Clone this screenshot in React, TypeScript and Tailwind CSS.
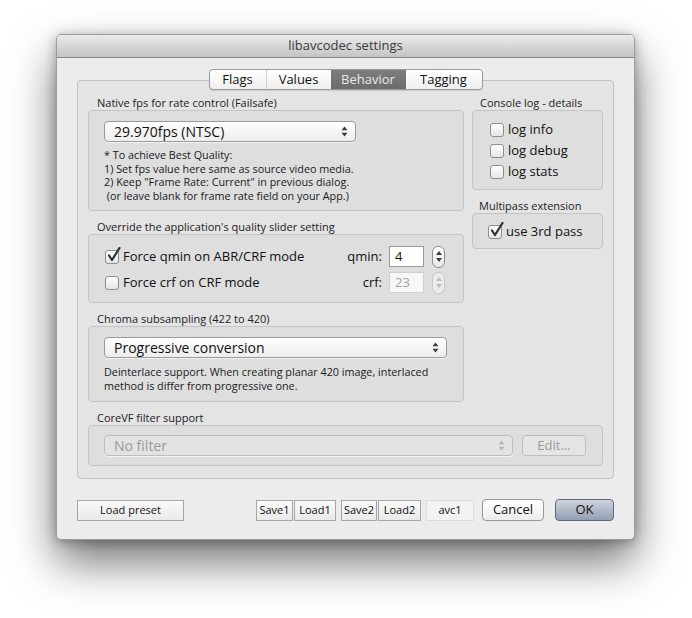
import React from 'react'

function Arrows({ dim }: { dim?: boolean }) {
  const c = dim ? '#b5b5b5' : '#3c3c3c'
  return (
    <svg width="7" height="11" viewBox="0 0 7 11" className="shrink-0">
      <path d="M3.5 0.5 L6.5 4.2 L0.5 4.2 Z" fill={c} />
      <path d="M3.5 10.5 L6.5 6.8 L0.5 6.8 Z" fill={c} />
    </svg>
  )
}

function Popup({ label, w, dim, big }: { label: string; w: string; dim?: boolean; big?: boolean }) {
  return (
    <div
      className={`${w} h-[21px] flex items-center justify-between pl-[9px] pr-[7px] rounded-[4px] border ${
        dim ? 'border-[#bdbdbd] bg-[#e3e3e3] text-[#9a9a9a]' : 'border-[#9a9a9a] bg-gradient-to-b from-white to-[#ededed] text-[#111]'
      } shadow-[0_1px_0_rgba(255,255,255,0.6)] ${big ? 'text-[14px]' : 'text-[13px]'}`}
    >
      <span>{label}</span>
      <Arrows dim={dim} />
    </div>
  )
}

function Check({ checked, label, size = 'text-[13px]' }: { checked?: boolean; label: string; size?: string }) {
  return (
    <div className={`flex items-center gap-[4px] ${size} text-[#111] h-[21px]`}>
      <div className="relative w-[14px] h-[14px] rounded-[3px] border border-[#8e8e8e] bg-gradient-to-b from-white to-[#e6e6e6] shrink-0">
        {checked && (
          <svg className="absolute -top-[4px] left-[1px]" width="14" height="16" viewBox="0 0 14 16">
            <path d="M2 8.5 L5 13 L12.5 1" stroke="#2a2f3a" strokeWidth="2.2" fill="none" strokeLinecap="round" strokeLinejoin="round" />
          </svg>
        )}
      </div>
      <span>{label}</span>
    </div>
  )
}

function Stepper({ dim }: { dim?: boolean }) {
  const c = dim ? '#bcbcbc' : '#3c3c3c'
  return (
    <div
      className={`w-[13px] h-[22px] rounded-[6px] border flex flex-col items-center justify-center gap-[3px] ${
        dim ? 'border-[#c9c9c9] bg-[#ececec]' : 'border-[#8e8e8e] bg-gradient-to-b from-white to-[#e8e8e8]'
      }`}
    >
      <svg width="6" height="4" viewBox="0 0 6 4"><path d="M3 0 L6 4 L0 4 Z" fill={c} /></svg>
      <svg width="6" height="4" viewBox="0 0 6 4"><path d="M3 4 L6 0 L0 0 Z" fill={c} /></svg>
    </div>
  )
}

function Group({ title, h, children, lp = 'pl-[9px]' }: { title: string; h: string; children: React.ReactNode; lp?: string }) {
  return (
    <div className="flex flex-col">
      <div className={`${lp} text-[11px] leading-[14px] text-[#222]`}>{title}</div>
      <div className={`${h} rounded-[4px] border border-[#c4c4c4] bg-[#dedede]`}>{children}</div>
    </div>
  )
}

function SmallBtn({ label, w }: { label: string; w: string }) {
  return (
    <div className={`${w} h-[21px] flex items-center justify-center border border-[#a6a6a6] bg-gradient-to-b from-[#fafafa] to-[#e9e9e9] text-[11px] text-[#111]`}>
      {label}
    </div>
  )
}

export default function App() {
  const tabs = ['Flags', 'Values', 'Behavior', 'Tagging']
  const tabW = ['w-[56px]', 'w-[65px]', 'w-[75px]', 'w-[76px]']
  return (
    <div className="w-[692px] h-[618px] bg-white pt-[34px] pl-[56px] font-['Open_Sans',sans-serif]">
      <div className="w-[579px] h-[506px] rounded-[5px] border border-[#9c9c9c] bg-[#ececec] overflow-hidden flex flex-col shadow-[0_22px_45px_rgba(0,0,0,0.55),0_2px_12px_rgba(0,0,0,0.3)]">
        <div className="h-[23px] shrink-0 flex items-center justify-center bg-gradient-to-b from-[#ebebeb] to-[#c4c4c4] border-b border-[#8a8a8a] text-[13px] text-[#3a3a3a]">
          libavcodec settings
        </div>

        <div className="px-[20px] pt-[22px]">
          <div className="h-[399px] rounded-[4px] border border-[#c2c2c2] bg-[#e4e4e4] px-[10px]">
            <div className="flex justify-center -mt-[12px]">
              <div className="flex h-[21px] rounded-[4px] border border-[#9a9a9a] overflow-hidden bg-gradient-to-b from-white to-[#efefef] shadow-[0_1px_1px_rgba(0,0,0,0.12)]">
                {tabs.map((t, i) => (
                  <div
                    key={t}
                    className={`${tabW[i]} flex items-center justify-center text-[13px] ${
                      t === 'Behavior'
                        ? 'bg-gradient-to-b from-[#7d7d7d] to-[#6c6c6c] text-[#e9e9e9]'
                        : 'text-[#111]'
                    } ${i === 1 ? 'border-l border-[#cfcfcf]' : ''}`}
                  >
                    {t}
                  </div>
                ))}
              </div>
            </div>

            <div className="mt-[6px] flex gap-[8px]">
              <div className="w-[376px] flex flex-col gap-[9px]">
                <Group title="Native fps for rate control (Failsafe)" h="h-[101px]">
                  <div className="pt-[10px] pl-[15px]">
                    <Popup label="29.970fps (NTSC)" w="w-[252px]" big />
                    <div className="mt-[6px] text-[10.8px] leading-[13.5px] text-[#1a1a1a]">
                      <div>* To achieve Best Quality:</div>
                      <div>1) Set fps value here same as source video media.</div>
                      <div>2) Keep "Frame Rate: Current" in previous dialog.</div>
                      <div>&nbsp;(or leave blank for frame rate field on your App.)</div>
                    </div>
                  </div>
                </Group>

                <Group title="Override the application's quality slider setting" h="h-[69px]">
                  <div className="pt-[11px] pl-[16px] pr-[18px] flex flex-col gap-[5px]">
                    <div className="flex items-center justify-between h-[21px]">
                      <Check checked label="Force qmin on ABR/CRF mode" />
                      <div className="flex items-center">
                        <span className="text-[13px] text-[#111] mr-[7px]">qmin:</span>
                        <div className="w-[35px] h-[21px] border border-[#9a9a9a] bg-white text-[13px] text-[#111] pl-[5px] flex items-center">4</div>
                        <div className="ml-[8px]"><Stepper /></div>
                      </div>
                    </div>
                    <div className="flex items-center justify-between h-[21px]">
                      <Check label="Force crf on CRF mode" />
                      <div className="flex items-center">
                        <span className="text-[13px] text-[#111] mr-[7px]">crf:</span>
                        <div className="w-[35px] h-[21px] border border-[#d0d0d0] bg-[#f7f7f7] text-[13px] text-[#a3a3a3] pl-[5px] flex items-center">23</div>
                        <div className="ml-[8px]"><Stepper dim /></div>
                      </div>
                    </div>
                  </div>
                </Group>

                <Group title="Chroma subsampling (422 to 420)" h="h-[76px]">
                  <div className="pt-[10px] pl-[15px]">
                    <Popup label="Progressive conversion" w="w-[343px]" big />
                    <div className="mt-[7px] text-[10.8px] leading-[13.5px] text-[#1a1a1a]">
                      <div>Deinterlace support. When creating planar 420 image, interlaced</div>
                      <div>method is differ from progressive one.</div>
                    </div>
                  </div>
                </Group>
              </div>

              <div className="w-[131px] flex flex-col gap-[9px]">
                <Group title="Console log - details" h="h-[80px]" lp="pl-[8px]">
                  <div className="pt-[8px] pl-[17px] flex flex-col">
                    <Check label="log info" />
                    <Check label="log debug" />
                    <Check label="log stats" />
                  </div>
                </Group>
                <Group title="Multipass extension" h="h-[36px]" lp="pl-[7px]">
                  <div className="pt-[7px] pl-[15px]">
                    <Check checked label="use 3rd pass" />
                  </div>
                </Group>
              </div>
            </div>

            <div className="mt-[9px]">
              <Group title="CoreVF filter support" h="h-[41px]">
                <div className="pt-[9px] pl-[15px] flex items-center gap-[9px]">
                  <Popup label="No filter" w="w-[409px]" dim big />
                  <div className="w-[64px] h-[21px] rounded-[4px] border border-[#bdbdbd] bg-[#e5e5e5] text-[13px] text-[#9a9a9a] flex items-center justify-center">
                    Edit...
                  </div>
                </div>
              </Group>
            </div>
          </div>

          <div className="mt-[20px] flex items-center justify-between">
            <SmallBtn label="Load preset" w="w-[107px]" />
            <div className="flex items-center">
              <div className="flex gap-[1px]">
                <SmallBtn label="Save1" w="w-[37px]" />
                <SmallBtn label="Load1" w="w-[42px]" />
              </div>
              <div className="flex gap-[1px] ml-[5px]">
                <SmallBtn label="Save2" w="w-[36px]" />
                <SmallBtn label="Load2" w="w-[43px]" />
              </div>
              <div className="ml-[5px] w-[48px] h-[21px] border border-[#dcdcdc] bg-[#f3f3f3] text-[11px] text-[#111] flex items-center justify-center">
                avc1
              </div>
              <div className="ml-[8px] w-[62px] h-[22px] rounded-[4px] border border-[#9a9a9a] bg-gradient-to-b from-white to-[#ececec] text-[13px] text-[#111] flex items-center justify-center">
                Cancel
              </div>
              <div className="ml-[11px] w-[59px] h-[22px] rounded-[4px] border border-[#5f6b80] bg-gradient-to-b from-[#cdd4df] to-[#949fb2] text-[13px] text-[#111] flex items-center justify-center">
                OK
              </div>
            </div>
          </div>
        </div>
      </div>
    </div>
  )
}
